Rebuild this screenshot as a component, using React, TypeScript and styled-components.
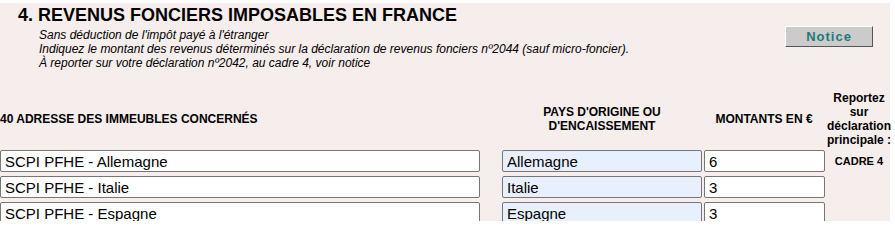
import React from "react";
import styled, { createGlobalStyle } from "styled-components";

const Global = createGlobalStyle`
  html, body { margin: 0; padding: 0; background: #ffffff; overflow: hidden; }
  body { font-family: "Liberation Sans", Arial, sans-serif; color: #000; }
`;

const Panel = styled.section`
  margin-top: 3px;
  width: 890px;
  height: 218px;
  background: #f6eded;
`;

const TopRow = styled.div`
  display: flex;
  justify-content: space-between;
  align-items: flex-start;
`;

const Title = styled.h2`
  margin: 0;
  padding: 2px 0 0 18px;
  font-size: 18px;
  line-height: 21px;
  font-weight: bold;
`;

const Intro = styled.div`
  padding: 2px 0 0 39px;
  font-size: 12px;
  line-height: 14px;
  font-style: italic;
`;

const NoticeButton = styled.button`
  margin: 23px 17px 0 0;
  width: 88px;
  height: 21px;
  padding: 0;
  background: #cbcbcb;
  border: 1px solid;
  border-color: #ffffff #555555 #555555 #ffffff;
  color: #1d7a78;
  font-family: "Liberation Sans", Arial, sans-serif;
  font-size: 13px;
  font-weight: bold;
  letter-spacing: 1px;
`;

const Table = styled.div`
  display: grid;
  grid-template-columns: 480px 222px 124px 66px;
  width: 892px;
  margin-top: 21px;
  row-gap: 4px;
`;

const Head = styled.div<{ $align?: string; $pl?: number }>`
  display: flex;
  align-items: center;
  justify-content: ${(p) => p.$align || "center"};
  text-align: center;
  padding-left: ${(p) => p.$pl || 0}px;
  min-height: 56px;
  margin-bottom: -1px;
  font-size: 12px;
  line-height: 14px;
  font-weight: bold;
`;

const Cell = styled.div<{ $pl?: number }>`
  display: flex;
  align-items: center;
  padding-left: ${(p) => p.$pl || 0}px;
`;

const Field = styled.input<{ $w: number; $fill?: boolean }>`
  box-sizing: border-box;
  width: ${(p) => p.$w}px;
  height: 22px;
  margin: 0;
  padding: 1px 4px 0;
  border: 1px solid #767676;
  border-radius: 2px;
  background: ${(p) => (p.$fill ? "#e8f0fe" : "#ffffff")};
  font-family: "Liberation Sans", Arial, sans-serif;
  font-size: 15px;
  color: #000;
`;

const Cadre = styled.div`
  display: flex;
  align-items: center;
  justify-content: center;
  font-size: 11px;
  font-weight: bold;
`;

const rows = [
  { addr: "SCPI PFHE - Allemagne", pays: "Allemagne", montant: "6" },
  { addr: "SCPI PFHE - Italie", pays: "Italie", montant: "3" },
  { addr: "SCPI PFHE - Espagne", pays: "Espagne", montant: "3" },
];

export default function App() {
  return (
    <>
      <Global />
      <Panel>
        <TopRow>
          <div>
            <Title>4. REVENUS FONCIERS IMPOSABLES EN FRANCE</Title>
            <Intro>
              Sans déduction de l'impôt payé à l'étranger
              <br />
              Indiquez le montant des revenus déterminés sur la déclaration de revenus fonciers nº2044 (sauf micro-foncier).
              <br />
              À reporter sur votre déclaration nº2042, au cadre 4, voir notice
            </Intro>
          </div>
          <NoticeButton type="button">Notice</NoticeButton>
        </TopRow>
        <Table>
          <Head $align="flex-start">40 ADRESSE DES IMMEUBLES CONCERNÉS</Head>
          <Head $pl={22}>
            PAYS D'ORIGINE OU
            <br />
            D'ENCAISSEMENT
          </Head>
          <Head>MONTANTS EN €</Head>
          <Head>
            Reportez
            <br />
            sur
            <br />
            déclaration
            <br />
            principale :
          </Head>
          {rows.map((r, i) => (
            <React.Fragment key={r.addr}>
              <Cell>
                <Field $w={480} defaultValue={r.addr} />
              </Cell>
              <Cell $pl={22}>
                <Field $w={200} $fill defaultValue={r.pays} />
              </Cell>
              <Cell $pl={2}>
                <Field $w={121} defaultValue={r.montant} />
              </Cell>
              {i === 0 ? <Cadre>CADRE 4</Cadre> : <div />}
            </React.Fragment>
          ))}
        </Table>
      </Panel>
    </>
  );
}
